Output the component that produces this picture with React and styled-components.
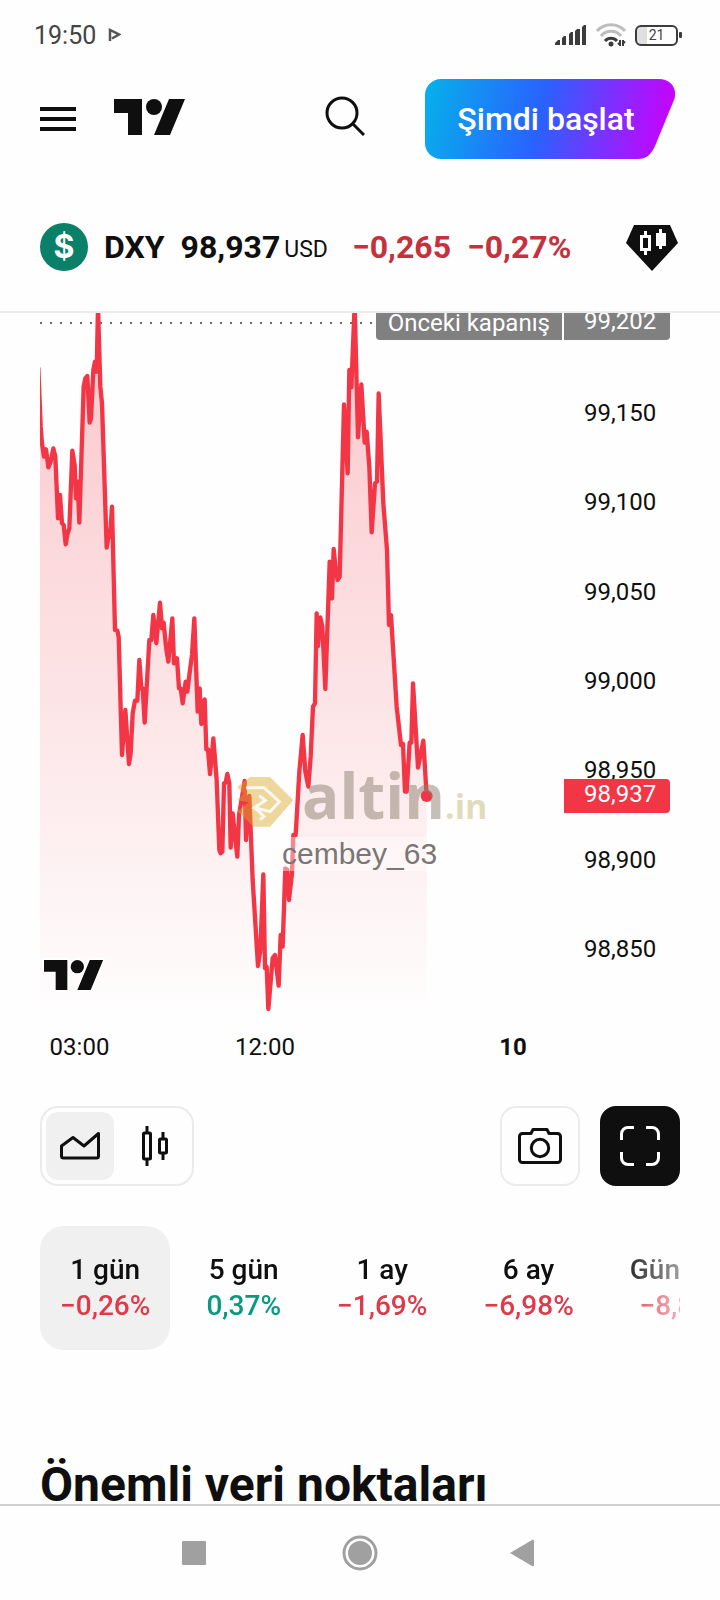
import * as React from 'react';
import styled, { createGlobalStyle } from 'styled-components';

// Plot units are thirds of a pixel, the plot area is 524 x 700
const PRICE_POINTS = [
  '-5,166 2,341 6,391 12,431 18,409 25,463 32,446 40,406 46,431 54,616 60,546 66,631 71,636 77,694 83,661 88,646',
  '97,413 104,456 108,556 113,506 118,629 131,221 136,196 142,189 149,329 153,316 160,171 165,146 170,176 174,-20',
  '181,221 186,271 200,704 206,666 210,671 216,581 225,951 232,953 236,971 246,1326 256,1191 267,1353 272,1321',
  '278,1201 285,1163 292,1163 298,1041 304,1126 308,1126 314,1229 328,981 334,981 340,906 349,991 360,869',
  '366,946 371,929 378,1001 385,1046 397,916 402,1051 411,1036 417,1126 422,1126 428,1171 437,1106 442,1136',
  '450,1071 456,1026 463,916 473,1196 479,1126 484,1233 494,1159 499,1309 504,1309 510,1383 520,1276 530,1401',
  '538,1611 542,1621 547,1616 552,1411 557,1409 562,1383 568,1411 572,1604 578,1501 585,1571 592,1631 597,1506',
  '614,1404 618,1581 628,1449 638,1701 654,1959 661,1911 670,1684 675,1966 680,1961 685,2088 698,1936 705,1926',
  '716,2018 722,1866 728,1901 736,1666 742,1671 747,1761 756,1681 760,1566 767,1566 778,1376 788,1266 796,1376',
  '805,1421 812,1331 819,1181 825,1171 830,901 834,999 841,913 847,941 856,1128 869,746 876,856 881,708 888,776',
  '893,801 899,791 912,274 923,481 928,171 934,223 944,-25 954,373 964,214 972,351 974,389 980,356 988,461',
  '995,658 1005,511 1011,506 1016,241 1030,571 1041,711 1047,936 1053,906 1070,1181 1083,1296 1089,1293',
  '1095,1436 1100,1436 1109,1289 1114,1289 1119,1111 1134,1364 1150,1283 1160,1449',
].join(' ');

const PRICES = ['99,150', '99,100', '99,050', '99,000', '98,950', '98,900', '98,850'];

const RANGES = [
  { label: '1 gün', change: '−0,26%', active: true },
  { label: '5 gün', change: '0,37%', up: true },
  { label: '1 ay', change: '−1,69%' },
  { label: '6 ay', change: '−6,98%' },
  { label: 'Gün başı', change: '−8,80%' },
];

const TvLogo = ({ width, height, halo }) => (
  <svg width={width} height={height} viewBox="0 4 36 18" overflow="visible" aria-label="TradingView">
    <g
      fill="#0f0f0f"
      stroke={halo ? '#fff' : 'none'}
      strokeWidth="2"
      paintOrder="stroke"
    >
      <path d="M14 22H7V11H0V4h14v18zM28 22h-8l7.5-18h8L28 22z" />
      <circle cx="20" cy="8" r="4" />
    </g>
  </svg>
);

const StatusIcons = () => (
  <StatusGroup>
    <svg width="32" height="20" viewBox="0 0 32 20" fill="#3c3c3c">
      <path d="M0 20v-2l3-3h2v5zM7 20v-7l2-2h2v9zM14 20V9l2-2h2v13zM20 20V6l2-2h3v16zM27 20V2l2-2h2v20z" />
    </svg>
    <svg width="30" height="24" viewBox="0 0 30 24" fill="none" strokeWidth="3">
      <path d="M1 8a19 19 0 0 1 28 0" stroke="#bdbdbd" />
      <path d="M5 13a13 13 0 0 1 20 0" stroke="#bdbdbd" />
      <path d="M9 18a8 8 0 0 1 12 0" stroke="#3c3c3c" />
      <circle cx="15" cy="21" r="2.500" fill="#3c3c3c" />
      <path d="M24 17v6M22 20l2 2M27 23v-6M29 20l-2-2" stroke="#3c3c3c" strokeWidth="2" />
    </svg>
    <Battery>
      <span>21</span>
    </Battery>
  </StatusGroup>
);

const Header = () => (
  <HeaderBar>
    <TopRow>
      <IconButton aria-label="Menü">
        <svg width="36" height="24" viewBox="0 0 36 24" fill="#0f0f0f">
          <path d="M0 0h36v4H0zM0 10h36v4H0zM0 20h36v4H0z" />
        </svg>
      </IconButton>
      <LogoLink href="#">
        <TvLogo width={72} height={36} />
      </LogoLink>
      <IconButton aria-label="Ara">
        <svg width="40" height="46" viewBox="0 0 40 46" fill="none" stroke="#0f0f0f" strokeWidth="3">
          <circle cx="17" cy="17" r="15" />
          <path d="M28 28l11 11" />
        </svg>
      </IconButton>
      <StartButton>
        <svg viewBox="0 0 250 80" preserveAspectRatio="none" aria-hidden="true">
          <defs>
            <linearGradient id="start" gradientUnits="userSpaceOnUse" x1="0" y1="12" x2="245" y2="62">
              <stop offset="0" stopColor="#06b0ea" />
              <stop offset="0.47" stopColor="#2962ff" />
              <stop offset="1" stopColor="#cc00ff" />
            </linearGradient>
          </defs>
          <path
            d="M16 0H234C246 0 253 10 249 21L230 67C226 76 221 80 213 80H16A16 16 0 0 1 0 64V16A16 16 0 0 1 16 0Z"
            fill="url(#start)"
          />
        </svg>
        <span>Şimdi başlat</span>
      </StartButton>
    </TopRow>

    <SymbolRow>
      <Coin>$</Coin>
      <Ticker>DXY</Ticker>
      <LastPrice>98,937</LastPrice>
      <Currency>USD</Currency>
      <Change>−0,265</Change>
      <Change>−0,27%</Change>
      <GemButton aria-label="Süper grafik">
        <svg width="52" height="46" viewBox="0 0 52 46">
          <path d="M8 0H44L52 18L26 46L0 18Z" fill="#0f0f0f" />
          <path
            d="M18 6h3v4h4v16h-4v4h-3v-4h-4V10h4zM17 13v10h5V13zM33 4h3v4h4v13h-4v3h-3v-3h-3V8h3z"
            fill="#fff"
            fillRule="evenodd"
          />
        </svg>
      </GemButton>
    </SymbolRow>
  </HeaderBar>
);

const Chart = () => (
  <ChartBox>
    <Plot>
      <svg viewBox="0 0 1572 2100" preserveAspectRatio="none" role="img" aria-label="DXY">
        <defs>
          <linearGradient id="fall" gradientUnits="userSpaceOnUse" x1="0" y1="0" x2="0" y2="2061">
            <stop offset="0" stopColor="#f23645" stopOpacity="0.28" />
            <stop offset="1" stopColor="#f23645" stopOpacity="0.01" />
          </linearGradient>
        </defs>
        <path d="M0 30H1560" stroke="#6a6a6a" strokeWidth="6" strokeDasharray="6 24" />
        <polygon points={`0,2061 ${PRICE_POINTS} 1160,2061`} fill="url(#fall)" />
        <polyline
          points={PRICE_POINTS}
          fill="none"
          stroke="#f23645"
          strokeWidth="13"
          strokeLinejoin="round"
          strokeLinecap="round"
        />
        <circle cx="1160" cy="1449" r="18" fill="#f23645" />
      </svg>
      <PlotLogo>
        <TvLogo width={60} height={30} halo />
      </PlotLogo>
      <Watermark>
        <svg width="58" height="52" viewBox="0 0 174 156">
          <path
            d="M42 6H102L172 76L102 155H52L4 108L38 82L4 76L22 56L4 36Z"
            fill="#dba827"
            fillOpacity="0.45"
          />
          <path
            d="M30 38H84L130 80L102 110L56 98L88 76L70 62M56 98L84 124L72 134"
            fill="none"
            stroke="#fff"
            strokeOpacity="0.85"
            strokeWidth="9"
          />
        </svg>
        <strong>altin</strong>
        <em>.in</em>
      </Watermark>
      <UserMark>cembey_63</UserMark>
    </Plot>
    <PriceAxis>
      {PRICES.map(price => <span key={price}>{price}</span>)}
    </PriceAxis>
    <PreviousClose>
      <span>Önceki kapanış</span>
      <span>99,202</span>
    </PreviousClose>
    <CurrentPrice>98,937</CurrentPrice>
  </ChartBox>
);

const Toolbar = () => (
  <ToolRow>
    <Switcher>
      <ToolButton active aria-label="Alan">
        <ToolIcon>
          <path d="M9.500 28L21 19.500L32 28L46.500 15.500V38a2 2 0 0 1-2 2h-33a2 2 0 0 1-2-2z" />
        </ToolIcon>
      </ToolButton>
      <ToolButton aria-label="Mumlar">
        <ToolIcon>
          <rect x="17.500" y="15" width="7" height="26" rx="1" />
          <rect x="33.500" y="21" width="7" height="14" rx="1" />
          <path d="M21 8v7M21 41v7M37 14v7M37 35v7" />
        </ToolIcon>
      </ToolButton>
    </Switcher>
    <SquareButton aria-label="Ekran görüntüsü">
      <ToolIcon>
        <path d="M10.500 15.500H19l2-4h14l2 4h8.500a3 3 0 0 1 3 3v23a3 3 0 0 1-3 3h-35a3 3 0 0 1-3-3v-23a3 3 0 0 1 3-3z" />
        <circle cx="28" cy="30" r="8.700" />
      </ToolIcon>
    </SquareButton>
    <SquareButton dark aria-label="Tam ekran">
      <ToolIcon>
        <path d="M9.500 22v-6a6.500 6.500 0 0 1 6.500-6.500h6M34 9.500h6a6.500 6.500 0 0 1 6.500 6.500v6M46.500 34v6a6.500 6.500 0 0 1-6.500 6.500h-6M22 46.500h-6a6.500 6.500 0 0 1-6.500-6.500v-6" />
      </ToolIcon>
    </SquareButton>
  </ToolRow>
);

const App = () => (
  <Page>
    <GlobalStyle />
    <StatusBar>
      <span>19:50</span>
      <svg width="13" height="14" viewBox="0 0 13 14" fill="none" stroke="#555" strokeWidth="2.500">
        <path d="M2 13V2l9 4.500-7 4" />
      </svg>
      <StatusIcons />
    </StatusBar>
    <Header />
    <Main>
      <Chart />
      <TimeAxis>
        <span>03:00</span>
        <span>12:00</span>
        <b>10</b>
      </TimeAxis>
      <Toolbar />
      <Ranges>
        {RANGES.map(range => (
          <RangeButton key={range.label} active={range.active} up={range.up}>
            <span>{range.label}</span>
            <span>{range.change}</span>
          </RangeButton>
        ))}
      </Ranges>
      <Title>Önemli veri noktaları</Title>
    </Main>
    <NavBar>
      <NavButton aria-label="Son uygulamalar">
        <svg width="24" height="24" viewBox="0 0 24 24"><rect width="24" height="24" rx="1" /></svg>
      </NavButton>
      <NavButton aria-label="Ana ekran">
        <svg width="36" height="36" viewBox="0 0 36 36">
          <circle cx="18" cy="18" r="12" />
          <circle cx="18" cy="18" r="16" fill="none" stroke="#a0a0a0" strokeWidth="3" />
        </svg>
      </NavButton>
      <NavButton aria-label="Geri">
        <svg width="32" height="28" viewBox="0 0 32 28"><path d="M0 14L22 1Q24 0 24 2V26Q24 28 22 27Z" /></svg>
      </NavButton>
    </NavBar>
  </Page>
);

export default App;

const GlobalStyle = createGlobalStyle`
  * {
    box-sizing: border-box;
  }

  body {
    margin: 0;
    background: #fefefe;
    color: #0f0f0f;
    font-family: Roboto, "Liberation Sans", sans-serif;
  }

  button {
    padding: 0;
    border: none;
    background: none;
    color: inherit;
    font-family: inherit;
    cursor: pointer;
  }

  svg {
    display: block;
    flex: none;
  }
`;

const Page = styled.div`
  display: flex;
  flex-direction: column;
  height: 100vh;
`;

const StatusBar = styled.div`
  display: flex;
  align-items: center;
  flex: none;
  gap: 12px;
  height: 70px;
  padding: 0 42px 0 34px;
  color: #444;
  font-size: 25px;
`;

const StatusGroup = styled.div`
  display: flex;
  align-items: center;
  gap: 9px;
  margin-left: auto;
`;

const Battery = styled.div`
  position: relative;
  width: 43px;
  height: 21px;
  border: 2px solid #3c3c3c;
  border-radius: 6px;
  background: linear-gradient(90deg, #e0e0e0 10px, transparent 10px);
  font-size: 14px;
  line-height: 17px;
  text-align: center;

  &::after {
    content: '';
    position: absolute;
    top: 5px;
    right: -6px;
    width: 3px;
    height: 6px;
    border-radius: 1px;
    background: #3c3c3c;
  }
`;

const HeaderBar = styled.header`
  flex: none;
  padding: 9px 40px 28px;
  border-bottom: 2px solid #ebebeb;
`;

const TopRow = styled.div`
  display: flex;
  align-items: center;
  height: 80px;
`;

const IconButton = styled.button`
  flex: none;
`;

const LogoLink = styled.a`
  margin: 0 auto 4px 38px;
`;

const StartButton = styled.button`
  position: relative;
  width: 250px;
  height: 80px;
  margin: 0 5px 0 60px;
  padding-right: 8px;
  color: #fff;
  font-size: 32px;
  font-weight: 500;

  svg {
    position: absolute;
    inset: 0;
    width: 100%;
    height: 100%;
  }

  span {
    position: relative;
  }
`;

const SymbolRow = styled.div`
  display: flex;
  align-items: center;
  height: 72px;
  margin-top: 52px;
  font-size: 32px;
  font-weight: 700;
  line-height: 40px;
`;

const Coin = styled.span`
  width: 48px;
  height: 48px;
  margin-right: 16px;
  border-radius: 50%;
  background: #0a8068;
  color: #fff;
  font-family: Inter, sans-serif;
  line-height: 48px;
  text-align: center;
`;

const Ticker = styled.span`
  margin-right: 16px;
`;

const LastPrice = styled.span`
  margin-right: 4px;
`;

const Currency = styled.span`
  margin-right: 8px;
  padding-top: 6px;
  font-size: 23px;
  font-weight: 400;
`;

const Change = styled.span`
  margin-left: 16px;
  color: #c5313d;
`;

const GemButton = styled(IconButton)`
  margin: 2px 2px 0 auto;
`;

const Main = styled.main`
  flex: 1;
  min-height: 0;
  overflow: hidden;
  padding: 0 40px;
`;

const ChartBox = styled.section`
  position: relative;
  display: flex;
  overflow: hidden;
  height: 700px;
  font-size: 24px;
`;

const Plot = styled.div`
  position: relative;
  flex: 1;

  > svg {
    width: 100%;
    height: 100%;
  }
`;

const PlotLogo = styled.div`
  position: absolute;
  left: 4px;
  bottom: 23px;
`;

const Watermark = styled.div`
  position: absolute;
  left: 196px;
  top: 440px;
  display: flex;
  align-items: baseline;
  font-family: "Open Sans", "Noto Sans", sans-serif;
  line-height: 84px;

  svg {
    align-self: center;
    margin-right: 8px;
  }

  strong {
    color: rgba(140, 128, 112, 0.5);
    font-size: 62px;
  }

  em {
    color: rgba(195, 185, 125, 0.5);
    font-size: 34px;
    font-style: normal;
    font-weight: 700;
  }
`;

const UserMark = styled.div`
  position: absolute;
  left: 242px;
  top: 524px;
  background: rgba(255, 255, 255, 0.4);
  color: #7a7675;
  font-family: "Liberation Sans", Arial, sans-serif;
  font-size: 30px;
  line-height: 34px;
`;

const PriceAxis = styled.div`
  display: flex;
  flex-direction: column;
  justify-content: space-between;
  width: 116px;
  padding: 86px 0 50px 20px;
  line-height: 28px;
`;

const PreviousClose = styled.div`
  position: absolute;
  top: -7px;
  right: 10px;
  display: flex;
  gap: 2px;
  color: #fff;
  line-height: 34px;

  span {
    padding: 0 12px;
    border-radius: 4px 0 0 4px;
    background: #808080;
  }

  span + span {
    width: 106px;
    padding: 0 0 4px 20px;
    border-radius: 0 4px 4px 0;
    line-height: 30px;
  }
`;

const CurrentPrice = styled.div`
  position: absolute;
  top: 466px;
  right: 10px;
  width: 106px;
  height: 34px;
  padding-left: 20px;
  border-radius: 0 4px 4px 0;
  background: #f23645;
  color: #fff;
  line-height: 30px;
`;

const TimeAxis = styled.div`
  display: grid;
  grid-template-columns: 79fr 292fr 204fr 65fr;
  font-size: 24px;
  line-height: 68px;
  text-align: center;
`;

const ToolRow = styled.div`
  display: flex;
  gap: 20px;
  margin-top: 25px;
`;

const Switcher = styled.div`
  display: flex;
  gap: 6px;
  margin-right: auto;
  padding: 4px;
  border: 2px solid #ebebeb;
  border-radius: 18px;
`;

const ToolIcon = styled.svg.attrs({ viewBox: '0 0 56 56', width: 56, height: 56 })`
  margin: auto;
  fill: none;
  stroke: currentColor;
  stroke-width: 3;
  stroke-linejoin: round;
`;

const ToolButton = styled.button.withConfig({ shouldForwardProp: prop => prop !== 'active' })`
  width: 68px;
  height: 68px;
  border-radius: 12px;
  background: ${props => props.active ? '#f0f0f0' : 'none'};
`;

const SquareButton = styled.button.withConfig({ shouldForwardProp: prop => prop !== 'dark' })`
  width: 80px;
  height: 80px;
  border: 2px solid ${props => props.dark ? '#0f0f0f' : '#ebebeb'};
  border-radius: 16px;
  background: ${props => props.dark ? '#0f0f0f' : 'none'};
  color: ${props => props.dark ? '#fff' : '#0f0f0f'};
`;

const Ranges = styled.div`
  display: flex;
  gap: 16px;
  overflow: hidden;
  margin-top: 40px;
  mask-image: linear-gradient(270deg, rgba(0, 0, 0, 0.4), #000 64px);
`;

const RangeButton = styled.button.withConfig({
  shouldForwardProp: prop => !['active', 'up'].includes(prop),
})`
  display: flex;
  flex: none;
  flex-direction: column;
  align-items: center;
  padding: 26px 20px;
  border-radius: 24px;
  background: ${props => props.active ? '#f0f0f0' : 'none'};
  font-size: 28px;
  font-weight: 500;
  line-height: 36px;

  span + span {
    color: ${props => props.up ? '#089981' : '#e0394a'};
  }
`;

const Title = styled.h2`
  margin: 107px 0 0;
  font-size: 48px;
  font-weight: 700;
  line-height: 56px;
  white-space: nowrap;
`;

const NavBar = styled.nav`
  display: flex;
  flex: none;
  align-items: center;
  justify-content: center;
  gap: 118px;
  height: 96px;
  border-top: 2px solid #d0d0d0;
`;

const NavButton = styled.button`
  display: grid;
  place-items: center;
  width: 48px;
  height: 48px;

  svg {
    fill: #a0a0a0;
  }
`;
